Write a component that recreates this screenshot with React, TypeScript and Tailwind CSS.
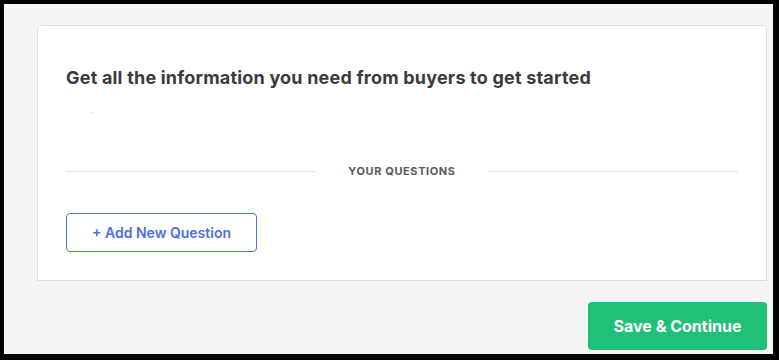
import React from "react";

export default function App() {
  return (
    <div className="h-[360px] w-[779px] bg-black pt-[4px] pl-[4px] pr-[6px] pb-[6px]" style={{ fontFamily: "Inter, 'Liberation Sans', sans-serif" }}>
      <div className="flex h-full w-full flex-col bg-[#f5f5f5] pl-[33px] pr-[6px] pt-[21px]">
        <div className="flex h-[256px] flex-col rounded-t-[5px] border border-[#dcdcdc] bg-white px-[28px]">
          <h1 className="mt-[41px] text-[18px] font-bold leading-[22px] tracking-[0.2px] text-[#3b3b3b]">
            Get all the information you need from buyers to get started
          </h1>
          <div className="ml-[26px] mt-[23px] h-[1px] w-[1px] bg-[#b9c6e8]" />
          <div className="mt-[51px] flex items-center">
            <div className="h-px flex-1 bg-[#e3e3e3]" />
            <span className="px-[32px] text-[11px] font-bold uppercase leading-[14px] tracking-[0.6px] text-[#5a5a5a]">
              Your Questions
            </span>
            <div className="h-px flex-1 bg-[#e3e3e3]" />
          </div>
          <button className="mt-[35px] flex h-[39px] w-[191px] items-center justify-center rounded-[4px] border border-[#4a73e8] bg-white text-[14px] font-semibold text-[#4a6fe3]">
            + Add New Question
          </button>
        </div>
        <div className="mt-[21px] flex justify-end">
          <button className="flex h-[48px] w-[179px] items-center justify-center rounded-[4px] bg-[#20c078] text-[16px] font-bold text-white">
            Save &amp; Continue
          </button>
        </div>
      </div>
    </div>
  );
}
